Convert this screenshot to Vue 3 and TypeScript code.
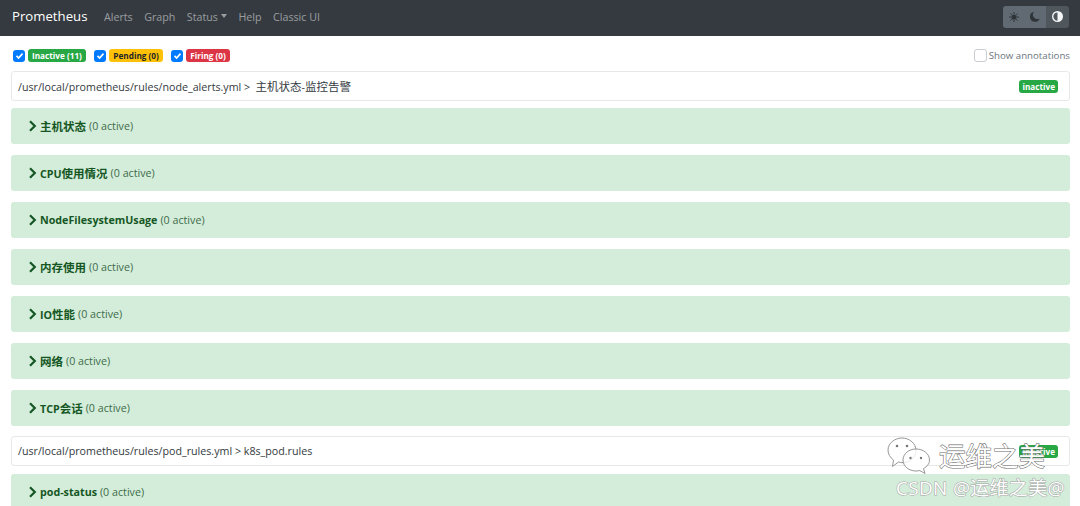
<script setup lang="ts">
const links = ['Alerts', 'Graph', 'Status', 'Help', 'Classic UI']
const groups = ['主机状态', 'CPU使用情况', 'NodeFilesystemUsage', '内存使用', 'IO性能', '网络', 'TCP会话']
const filters = [
  { label: 'Inactive (11)', cls: 'green' },
  { label: 'Pending (0)', cls: 'yellow' },
  { label: 'Firing (0)', cls: 'red' },
]
const split = (s: string) => s.split(/([\u4e00-\u9fff]+)/).filter(Boolean)
const isCjk = (s: string) => /[\u4e00-\u9fff]/.test(s)
</script>

<template>
  <div class="page">
    <nav class="navbar">
      <span class="brand">Prometheus</span>
      <ul class="links">
        <li v-for="l in links" :key="l" :class="{ caret: l === 'Status' }">{{ l }}</li>
      </ul>
      <div class="theme">
        <span class="tbtn">
          <svg width="10" height="10" viewBox="0 0 16 16"><circle cx="8" cy="8" r="4.2" fill="#2f3438"/><g stroke="#2f3438" stroke-width="1.6"><path d="M8 0v3M8 13v3M0 8h3M13 8h3M2.3 2.3l2.2 2.2M11.5 11.5l2.2 2.2M2.3 13.7l2.2-2.2M11.5 4.5l2.2-2.2"/></g></svg>
        </span>
        <span class="tbtn mid">
          <svg width="10" height="11" viewBox="0 0 16 16"><path d="M6.5 .5A8 8 0 1 0 15.500 11 7 7 0 0 1 6.500 .5z" fill="#2f3438"/></svg>
        </span>
        <span class="tbtn on">
          <svg width="11" height="11" viewBox="0 0 16 16"><circle cx="8" cy="8" r="7" fill="none" stroke="#f4f5f6" stroke-width="2"/><path d="M8 1a7 7 0 0 1 0 14z" fill="#f4f5f6"/></svg>
        </span>
      </div>
    </nav>

    <main class="content">
      <div class="filters">
        <div class="left">
          <label v-for="f in filters" :key="f.label" class="filter">
            <span class="check">
              <svg width="9" height="9" viewBox="0 0 12 12"><path d="M2 6.500l2.800 2.800L10 3.500" fill="none" stroke="#fff" stroke-width="2.200"/></svg>
            </span>
            <span class="badge" :class="f.cls">{{ f.label }}</span>
          </label>
        </div>
        <label class="annot"><span class="box"></span>Show annotations</label>
      </div>

      <div class="file">
        <span>/usr/local/prometheus/rules/node_alerts.yml &gt; <span class="cjk lead">主机状态</span>-<span class="cjk">监控告警</span></span>
        <span class="badge green state">inactive</span>
      </div>
      <div v-for="g in groups" :key="g" class="group">
        <svg class="chev" width="9" height="12" viewBox="0 0 9 12"><path d="M2 1.200L6.800 6 2 10.800" fill="none" stroke="#155724" stroke-width="2.200"/></svg>
        <strong><span v-for="(p, i) in split(g)" :key="i" :class="{ cjk: isCjk(p) }">{{ p }}</span></strong>
        <span class="count">(0 active)</span>
      </div>

      <div class="file second">
        <span>/usr/local/prometheus/rules/pod_rules.yml &gt; k8s_pod.rules</span>
        <span class="badge green state">inactive</span>
      </div>
      <div class="group">
        <svg class="chev" width="9" height="12" viewBox="0 0 9 12"><path d="M2 1.200L6.800 6 2 10.800" fill="none" stroke="#155724" stroke-width="2.200"/></svg>
        <strong>pod-status</strong>
        <span class="count">(0 active)</span>
      </div>
    </main>

    <div class="wm-top">
      <svg width="44" height="37" viewBox="0 0 44 37">
        <g fill="rgba(255,255,255,.8)" stroke="#8a8a8a" stroke-width=".9">
          <path d="M15 1C7.500 1 1 6.500 1 13c0 4 2 7.500 5.500 10l-1 6.500 6-4.500c1.500.500 3 .7 4.500.7C23 25.700 29 20 29 13.500 29 6.500 22.500 1 15 1z"/>
          <path d="M29 12c-7 0-13 4.800-13 11s6 11 13 11c1.300 0 2.500-.2 3.700-.5l5.300 3-1.500-5c3.800-2 6-5 6-8.500 0-6.200-6-11-13.500-11z"/>
        </g>
        <g fill="#777"><circle cx="10" cy="9" r="1.300"/><circle cx="20" cy="9" r="1.300"/><circle cx="23.500" cy="21" r="1.200"/><circle cx="34" cy="21" r="1.200"/></g>
      </svg>
      <span class="wm-text">运维之美</span>
    </div>
    <div class="wm-bottom">CSDN @运维之美@</div>
  </div>
</template>

<style>
html, body { margin: 0; background: #fff; overflow: hidden; }
</style>

<style scoped>
.page {
  position: relative;
  width: 1080px;
  height: 506px;
  overflow: hidden;
  font-family: "Open Sans", "Noto Sans CJK SC", sans-serif;
  font-size: 10.700px;
  color: #212529;
}
.cjk { font-size: 11.500px; }
.lead { margin-left: 2.500px; }
.navbar {
  height: 36px;
  background: #343a40;
  display: flex;
  align-items: center;
  padding: 0 11px 3px 12px;
  box-sizing: border-box;
}
.brand { color: #fff; font-size: 13.200px; margin-right: 16.500px; margin-top: -2px; }
.links { display: flex; gap: 11.500px; list-style: none; margin: 0; padding: 0; color: rgba(255,255,255,.5); font-size: 10.700px; }
.caret { display: flex; align-items: center; }
.caret::after { content: ""; margin-left: 3px; border-top: 4px solid; border-left: 3.500px solid transparent; border-right: 3.500px solid transparent; margin-top: -2px; }
.theme { margin-left: auto; display: flex; height: 22px; border-radius: 3px; overflow: hidden; }
.tbtn { width: 21px; background: #616a72; display: flex; align-items: center; justify-content: center; }
.tbtn.mid { width: 22px; }
.tbtn.on { width: 23px; background: #4f565c; }
.content { padding: 0 10px 0 11px; }
.filters { display: flex; justify-content: space-between; align-items: flex-start; height: 35px; padding-top: 13px; box-sizing: border-box; }
.left { display: flex; gap: 8.500px; padding-left: 2px; }
.filter { display: flex; align-items: center; gap: 3px; }
.check { width: 12px; height: 12px; border-radius: 3px; background: #007bff; display: flex; align-items: center; justify-content: center; }
.badge { font-weight: 700; font-size: 8.200px; line-height: 13px; padding: 0 4px; border-radius: 3px; color: #fff; }
.state { padding: 0 3px; margin-top: 1px; }
.green { background: #28a745; }
.yellow { background: #ffc107; color: #212529; }
.red { background: #dc3545; }
.annot { display: flex; align-items: center; gap: 2px; font-size: 9.700px; line-height: 13px; color: #6c757d; }
.box { width: 13px; height: 13px; border: 1px solid #c8ccd0; border-radius: 3px; box-sizing: border-box; }
.file {
  height: 30px;
  box-sizing: border-box;
  border: 1px solid rgba(0,0,0,.09);
  border-radius: 3px;
  display: flex;
  align-items: center;
  justify-content: space-between;
  padding: 0 11px 1px 6px;
  color: #343a40;
  margin-bottom: 7px;
}
.file.second { margin-top: -1px; margin-bottom: 8px; }
.group {
  height: 36px;
  box-sizing: border-box;
  background: #d4edda;
  border-radius: 3px;
  display: flex;
  align-items: center;
  padding-left: 17px;
  margin-bottom: 11px;
  color: #155724;
}
.chev { margin-right: 3px; }
.count { margin-left: 3px; color: #3d6b49; }
.wm-top {
  position: absolute;
  left: 887px;
  top: 437px;
  display: flex;
  align-items: center;
  gap: 8px;
}
.wm-text {
  font-size: 26.500px;
  line-height: 36px;
  color: #fff;
  -webkit-text-stroke: 1.100px #6a6a6a;
  paint-order: stroke fill;
}
.wm-bottom {
  position: absolute;
  left: 896px;
  top: 475px;
  font-size: 19px;
  line-height: 26px;
  color: #fff;
  -webkit-text-stroke: 1px #a0a0a0;
  paint-order: stroke fill;
  letter-spacing: .3px;
  white-space: nowrap;
}
</style>
